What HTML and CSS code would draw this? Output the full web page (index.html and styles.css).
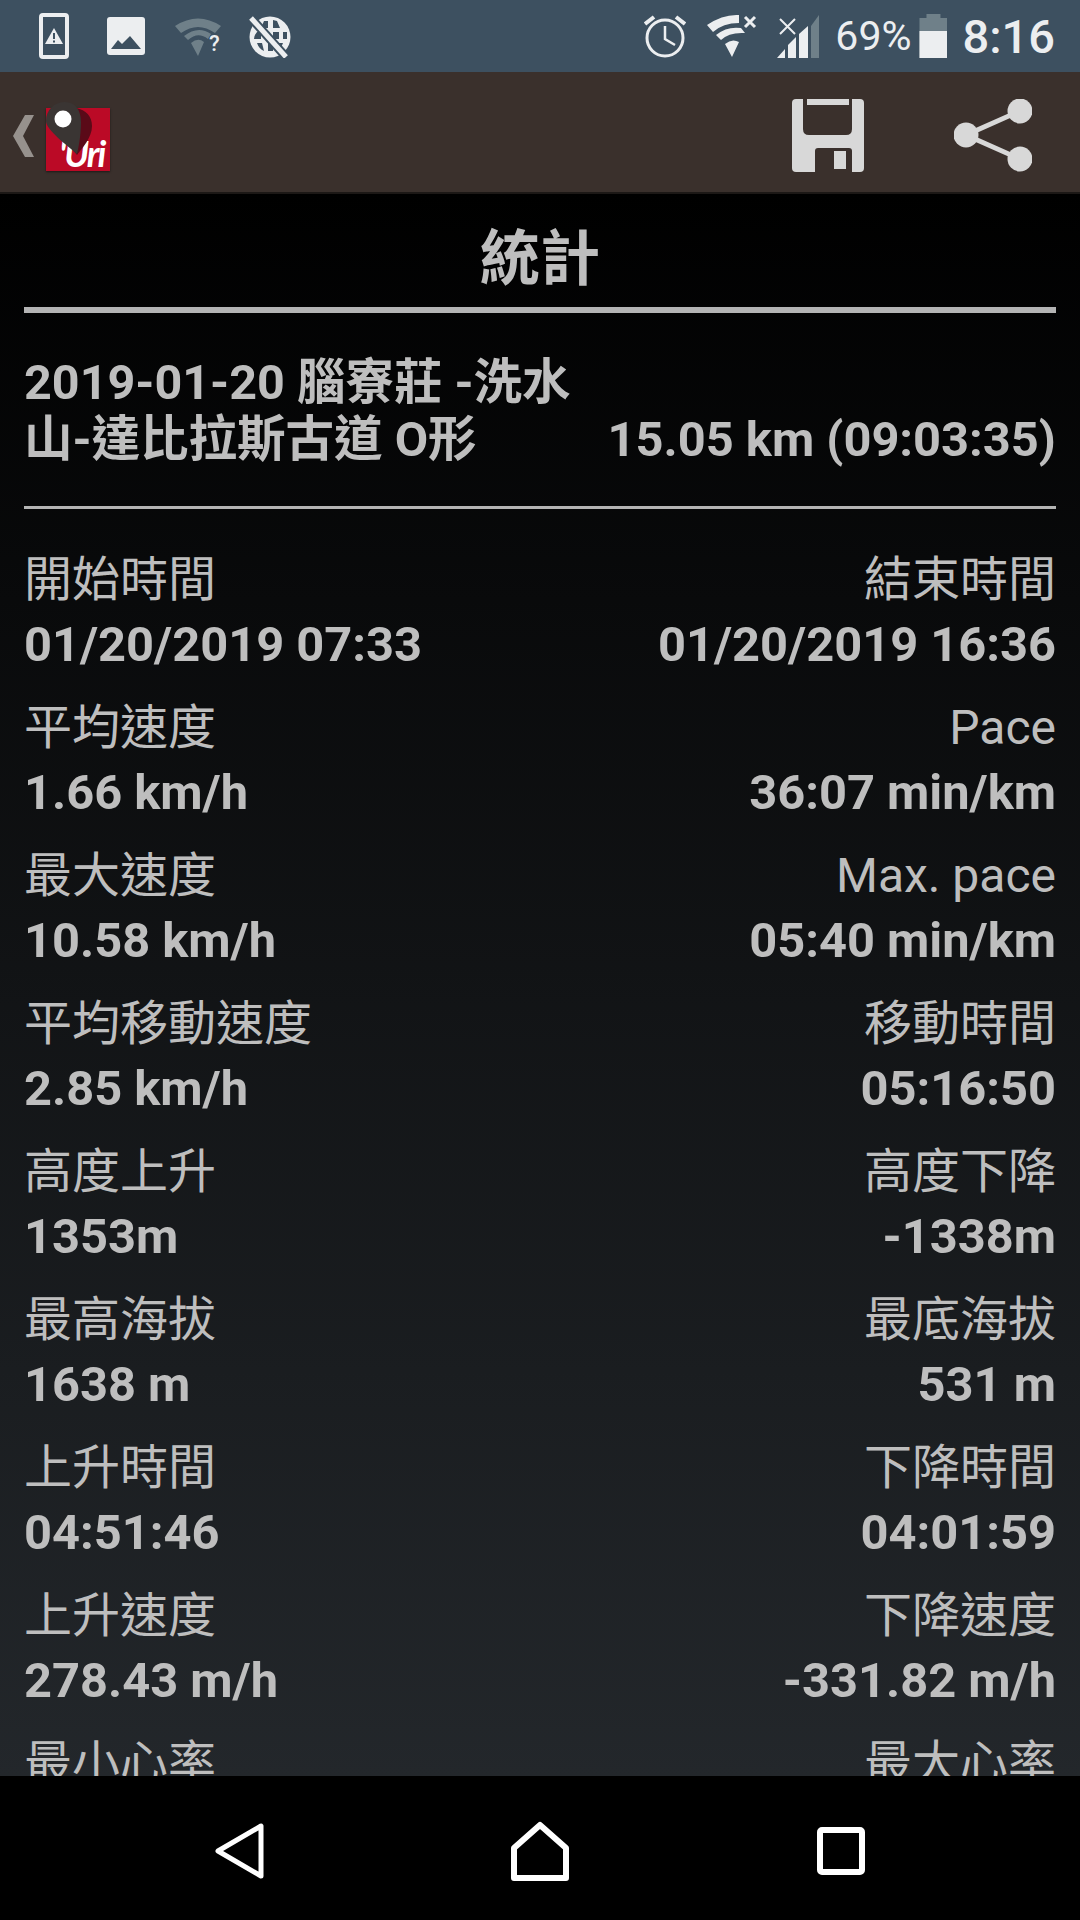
FILE: index.html
```html
<!DOCTYPE html>
<html lang="zh-Hant">
<head>
  <meta charset="UTF-8" />
  <meta name="viewport" content="width=device-width, initial-scale=1.0" />
  <title>統計</title>
  <link rel="stylesheet" href="styles.css">
</head>
<body>
  <div class="phone">
    <div class="status-bar">
      <div class="status-left">
        <svg class="ic ic-device" viewBox="0 0 30 46"><rect x="2" y="2" width="26" height="42" rx="2" fill="none" stroke="#eceef0" stroke-width="4"/><path d="M15 15L24 31H6Z" fill="#eceef0"/><path d="M14 20h2v6h-2zM14 27.500h2v2h-2z" fill="#3d5060"/></svg>
        <svg class="ic ic-image" viewBox="0 0 38 38"><rect width="38" height="38" rx="3" fill="#eceef0"/><path d="M4 32L11 23L15 27L23 19L34 32Z" fill="#3d5060"/></svg>
        <svg class="ic ic-wifi-q" viewBox="0 0 47 39"><path d="M0 9Q23-6 46 9L40 16Q23 4 6 16ZM9 19Q23 8 36 17L33 22Q23 14 13 23ZM16 26Q23 20 29 25L23 39Z" fill="#6f8089"/><text x="34" y="34" class="q">?</text></svg>
        <svg class="ic ic-globe" viewBox="0 0 42 43"><circle cx="21" cy="22" r="20.500" fill="#eceef0"/><path d="M15 6L12 13H19V6ZM24 5V13H31L28 6ZM8 17H12V24H5Q5 20 8 17ZM16 17H20V24H16ZM24 17H30V24H24ZM34 17H38V24H34ZM8 28H13L15 36Q10 34 8 28ZM19 28H24V36H19ZM29 28H34Q32 34 28 36Z" fill="#3d5060"/><path d="M2 3L37 42" stroke="#3d5060" stroke-width="9"/><path d="M2 3L37 42" stroke="#eceef0" stroke-width="5"/></svg>
      </div>
      <div class="status-right">
        <svg class="ic ic-alarm" viewBox="0 0 42 44"><circle cx="21" cy="24" r="18" fill="none" stroke="#eceef0" stroke-width="3"/><path d="M21 12v13l10 6" fill="none" stroke="#eceef0" stroke-width="2.500"/><path d="M1 10L10 3M41 10L32 3" stroke="#eceef0" stroke-width="4"/></svg>
        <svg class="ic ic-wifi" viewBox="0 0 50 44"><path d="M0 11Q16 0 32 1V9Q16 9 6 18ZM9 21Q20 12 34 14L38 19Q22 18 14 26ZM18 30Q25 24 32 28L25 43Z" fill="#eceef0"/><path d="M38 3L48 13M48 3L38 13" stroke="#eceef0" stroke-width="3"/></svg>
        <svg class="ic ic-signal" viewBox="0 0 42 44"><path d="M34 12L42 1V44H34Z" fill="#6f8089"/><path d="M0 44L8 35V44ZM11 44V31L19 23V44ZM22 44V20L31 12V44Z" fill="#eceef0"/><path d="M3 5L18 20M18 5L3 20" stroke="#eceef0" stroke-width="2"/></svg>
        <span class="battery-pct">69%</span>
        <div class="battery"><div class="battery-fill"></div></div>
        <span class="clock">8:16</span>
      </div>
    </div>

    <div class="toolbar">
      <div class="brand">
        <svg class="back" viewBox="0 0 21 42"><path d="M21 0H12L0 21L12 42H21L10 21Z" fill="#96918d"/></svg>
        <div class="logo">
          <span class="logo-text">'Uri</span>
          <svg class="pin" viewBox="0 0 46 54"><path d="M30 6C40 8 46 14 46 24C46 36 36 46 31 53L20 40Z" fill="#5a0a18"/><path d="M19 0C30 0 35 9 35 20C35 32 33 44 31 52C22 44 0 28 0 19C0 8 8 0 19 0Z" fill="#3a3533"/><circle cx="17" cy="17" r="8.500" fill="#fff"/></svg>
        </div>
      </div>
      <div class="actions">
        <svg class="save" viewBox="0 0 72 73"><path d="M4 0H68Q72 0 72 4V69Q72 73 68 73H4Q0 73 0 69V4Q0 0 4 0Z" fill="#d8d8d8"/><path d="M11 0H60V30Q60 36 54 36H17Q11 36 11 30Z" fill="#3a302c"/><rect x="15" y="0" width="42" height="6" fill="#d8d8d8"/><path d="M23 73V52Q23 49 26 49H57Q60 49 60 52V73Z" fill="#3a302c"/><rect x="42" y="52" width="12" height="18" fill="#d8d8d8"/></svg>
        <svg class="share" viewBox="0 0 78 73"><path d="M66 12L12 36L66 60" fill="none" stroke="#d8d8d8" stroke-width="5"/><circle cx="66" cy="12" r="12.500" fill="#d8d8d8"/><circle cx="12" cy="36" r="12.500" fill="#d8d8d8"/><circle cx="66" cy="60" r="12.500" fill="#d8d8d8"/></svg>
      </div>
    </div>

    <div class="content">
      <h1 class="title">統計</h1>
      <div class="track">
        <div class="track-name">2019-01-20 腦寮莊 -洗水<br>山-達比拉斯古道 O形</div>
        <div class="track-total">15.05 km (09:03:35)</div>
      </div>
      <div class="stats">
        <div class="stat"><span class="label">開始時間</span><span class="value">01/20/2019 07:33</span></div>
        <div class="stat right"><span class="label">結束時間</span><span class="value">01/20/2019 16:36</span></div>
        <div class="stat"><span class="label">平均速度</span><span class="value">1.66 km/h</span></div>
        <div class="stat right"><span class="label">Pace</span><span class="value">36:07 min/km</span></div>
        <div class="stat"><span class="label">最大速度</span><span class="value">10.58 km/h</span></div>
        <div class="stat right"><span class="label">Max. pace</span><span class="value">05:40 min/km</span></div>
        <div class="stat"><span class="label">平均移動速度</span><span class="value">2.85 km/h</span></div>
        <div class="stat right"><span class="label">移動時間</span><span class="value">05:16:50</span></div>
        <div class="stat"><span class="label">高度上升</span><span class="value">1353m</span></div>
        <div class="stat right"><span class="label">高度下降</span><span class="value">-1338m</span></div>
        <div class="stat"><span class="label">最高海拔</span><span class="value">1638 m</span></div>
        <div class="stat right"><span class="label">最底海拔</span><span class="value">531 m</span></div>
        <div class="stat"><span class="label">上升時間</span><span class="value">04:51:46</span></div>
        <div class="stat right"><span class="label">下降時間</span><span class="value">04:01:59</span></div>
        <div class="stat"><span class="label">上升速度</span><span class="value">278.43 m/h</span></div>
        <div class="stat right"><span class="label">下降速度</span><span class="value">-331.82 m/h</span></div>
        <div class="stat"><span class="label">最小心率</span></div>
        <div class="stat right"><span class="label">最大心率</span></div>
      </div>
    </div>

    <div class="nav-bar">
      <svg class="nav-back" viewBox="0 0 50 56"><path d="M46 3V53L3 28Z" fill="none" stroke="#fff" stroke-width="5" stroke-linejoin="round"/></svg>
      <svg class="nav-home" viewBox="0 0 58 60"><path d="M29 4L55 27V57H3V27Z" fill="none" stroke="#fff" stroke-width="6" stroke-linejoin="round"/></svg>
      <svg class="nav-recent" viewBox="0 0 48 48"><rect x="3" y="3" width="42" height="42" rx="2" fill="none" stroke="#fff" stroke-width="6"/></svg>
    </div>
  </div>
</body>
</html>
```

FILE: styles.css
```css
:root {
  --text: #bebebe;
  --rule: #b4b4b4;
  --icon: #eceef0;
}

* {
  box-sizing: border-box;
}

body {
  margin: 0;
  background: #000;
  font-family: Roboto, "Noto Sans CJK TC", sans-serif;
}

.phone {
  display: flex;
  flex-direction: column;
  width: 1080px;
  height: 1920px;
  overflow: hidden;
}

.ic {
  display: block;
  flex: none;
}

.q {
  font-family: Roboto, sans-serif;
  font-size: 22px;
  font-weight: 500;
  fill: #eceef0;
}

/* status bar */
.status-bar {
  display: flex;
  justify-content: space-between;
  align-items: center;
  flex: none;
  height: 72px;
  padding: 0 25px 0 39px;
  background: #3d5060;
}

.status-left,
.status-right {
  display: flex;
  align-items: center;
}

.ic-device {
  width: 30px;
  height: 46px;
}

.ic-image {
  width: 38px;
  height: 38px;
  margin-left: 38px;
}

.ic-wifi-q {
  width: 47px;
  height: 39px;
  margin-left: 30px;
}

.ic-globe {
  width: 42px;
  height: 43px;
  margin-left: 27px;
}

.ic-alarm {
  width: 42px;
  height: 44px;
}

.ic-wifi {
  width: 50px;
  height: 44px;
  margin-left: 21px;
}

.ic-signal {
  width: 42px;
  height: 44px;
  margin-left: 20px;
}

.battery-pct {
  margin-left: 16px;
  font-size: 41px;
  color: var(--icon);
}

.battery {
  position: relative;
  width: 28px;
  height: 44px;
  margin-left: 8px;
  background: #6f8089;
  clip-path: polygon(0 4px, 25% 4px, 25% 0, 75% 0, 75% 4px, 100% 4px, 100% 100%, 0 100%);
}

.battery-fill {
  position: absolute;
  left: 0;
  right: 0;
  bottom: 0;
  height: 27px;
  background: var(--icon);
}

.clock {
  margin-left: 15px;
  font-size: 47px;
  font-weight: 500;
  color: var(--icon);
}

/* toolbar */
.toolbar {
  display: flex;
  justify-content: space-between;
  align-items: center;
  flex: none;
  height: 122px;
  padding: 7px 48px 0 13px;
  background: #3a302c;
  border-bottom: 2px solid #1c1816;
}

.brand {
  display: flex;
  align-items: center;
  gap: 12px;
}

.back {
  display: block;
  width: 21px;
  height: 42px;
}

.logo {
  position: relative;
  width: 64px;
  height: 63px;
  margin-top: 7px;
  background: #bb0a26;
  box-shadow: 0 1px 2px rgba(0, 0, 0, 0.5);
}

.logo-text {
  position: absolute;
  left: 13px;
  bottom: 0;
  font-family: Lato, sans-serif;
  font-size: 36px;
  font-style: italic;
  font-weight: 700;
  letter-spacing: -2px;
  line-height: 36px;
  white-space: nowrap;
  color: #fff;
}

.pin {
  position: absolute;
  left: 0;
  top: -6px;
  width: 46px;
  height: 54px;
}

.actions {
  display: flex;
  align-items: center;
  gap: 90px;
}

.save {
  display: block;
  width: 72px;
  height: 73px;
}

.share {
  display: block;
  width: 78px;
  height: 73px;
}

/* content */
.content {
  flex: 1;
  min-height: 0;
  overflow: hidden;
  padding: 0 24px;
  background: linear-gradient(#000, #23272b);
  color: var(--text);
}

.title {
  margin: 0;
  height: 119px;
  padding-top: 31px;
  border-bottom: 6px solid var(--rule);
  font-size: 60px;
  font-weight: 700;
  line-height: 70px;
  text-align: center;
}

.track {
  display: flex;
  justify-content: space-between;
  align-items: flex-end;
  height: 196px;
  padding: 0 0 38px;
  border-bottom: 3px solid var(--rule);
  font-size: 48.500px;
  font-weight: 700;
  line-height: 57px;
}

.track-total {
  font-size: 48.800px;
  white-space: nowrap;
}

.stats {
  display: grid;
  grid-template-columns: 1fr 1fr;
  grid-auto-rows: 148px;
  padding-top: 38px;
}

.stat {
  display: flex;
  flex-direction: column;
  white-space: nowrap;
}

.stat.right {
  align-items: flex-end;
}

.label {
  font-size: 48px;
  line-height: 66px;
}

.value {
  font-size: 48.800px;
  font-weight: 700;
  line-height: 64px;
}

/* nav bar */
.nav-bar {
  display: flex;
  justify-content: center;
  align-items: center;
  flex: none;
  height: 144px;
  padding-top: 6px;
  background: #000;
}

.nav-back {
  display: block;
  width: 50px;
  height: 56px;
}

.nav-home {
  display: block;
  width: 58px;
  height: 60px;
  margin-left: 246px;
}

.nav-recent {
  display: block;
  width: 48px;
  height: 48px;
  margin-left: 248px;
}
```
